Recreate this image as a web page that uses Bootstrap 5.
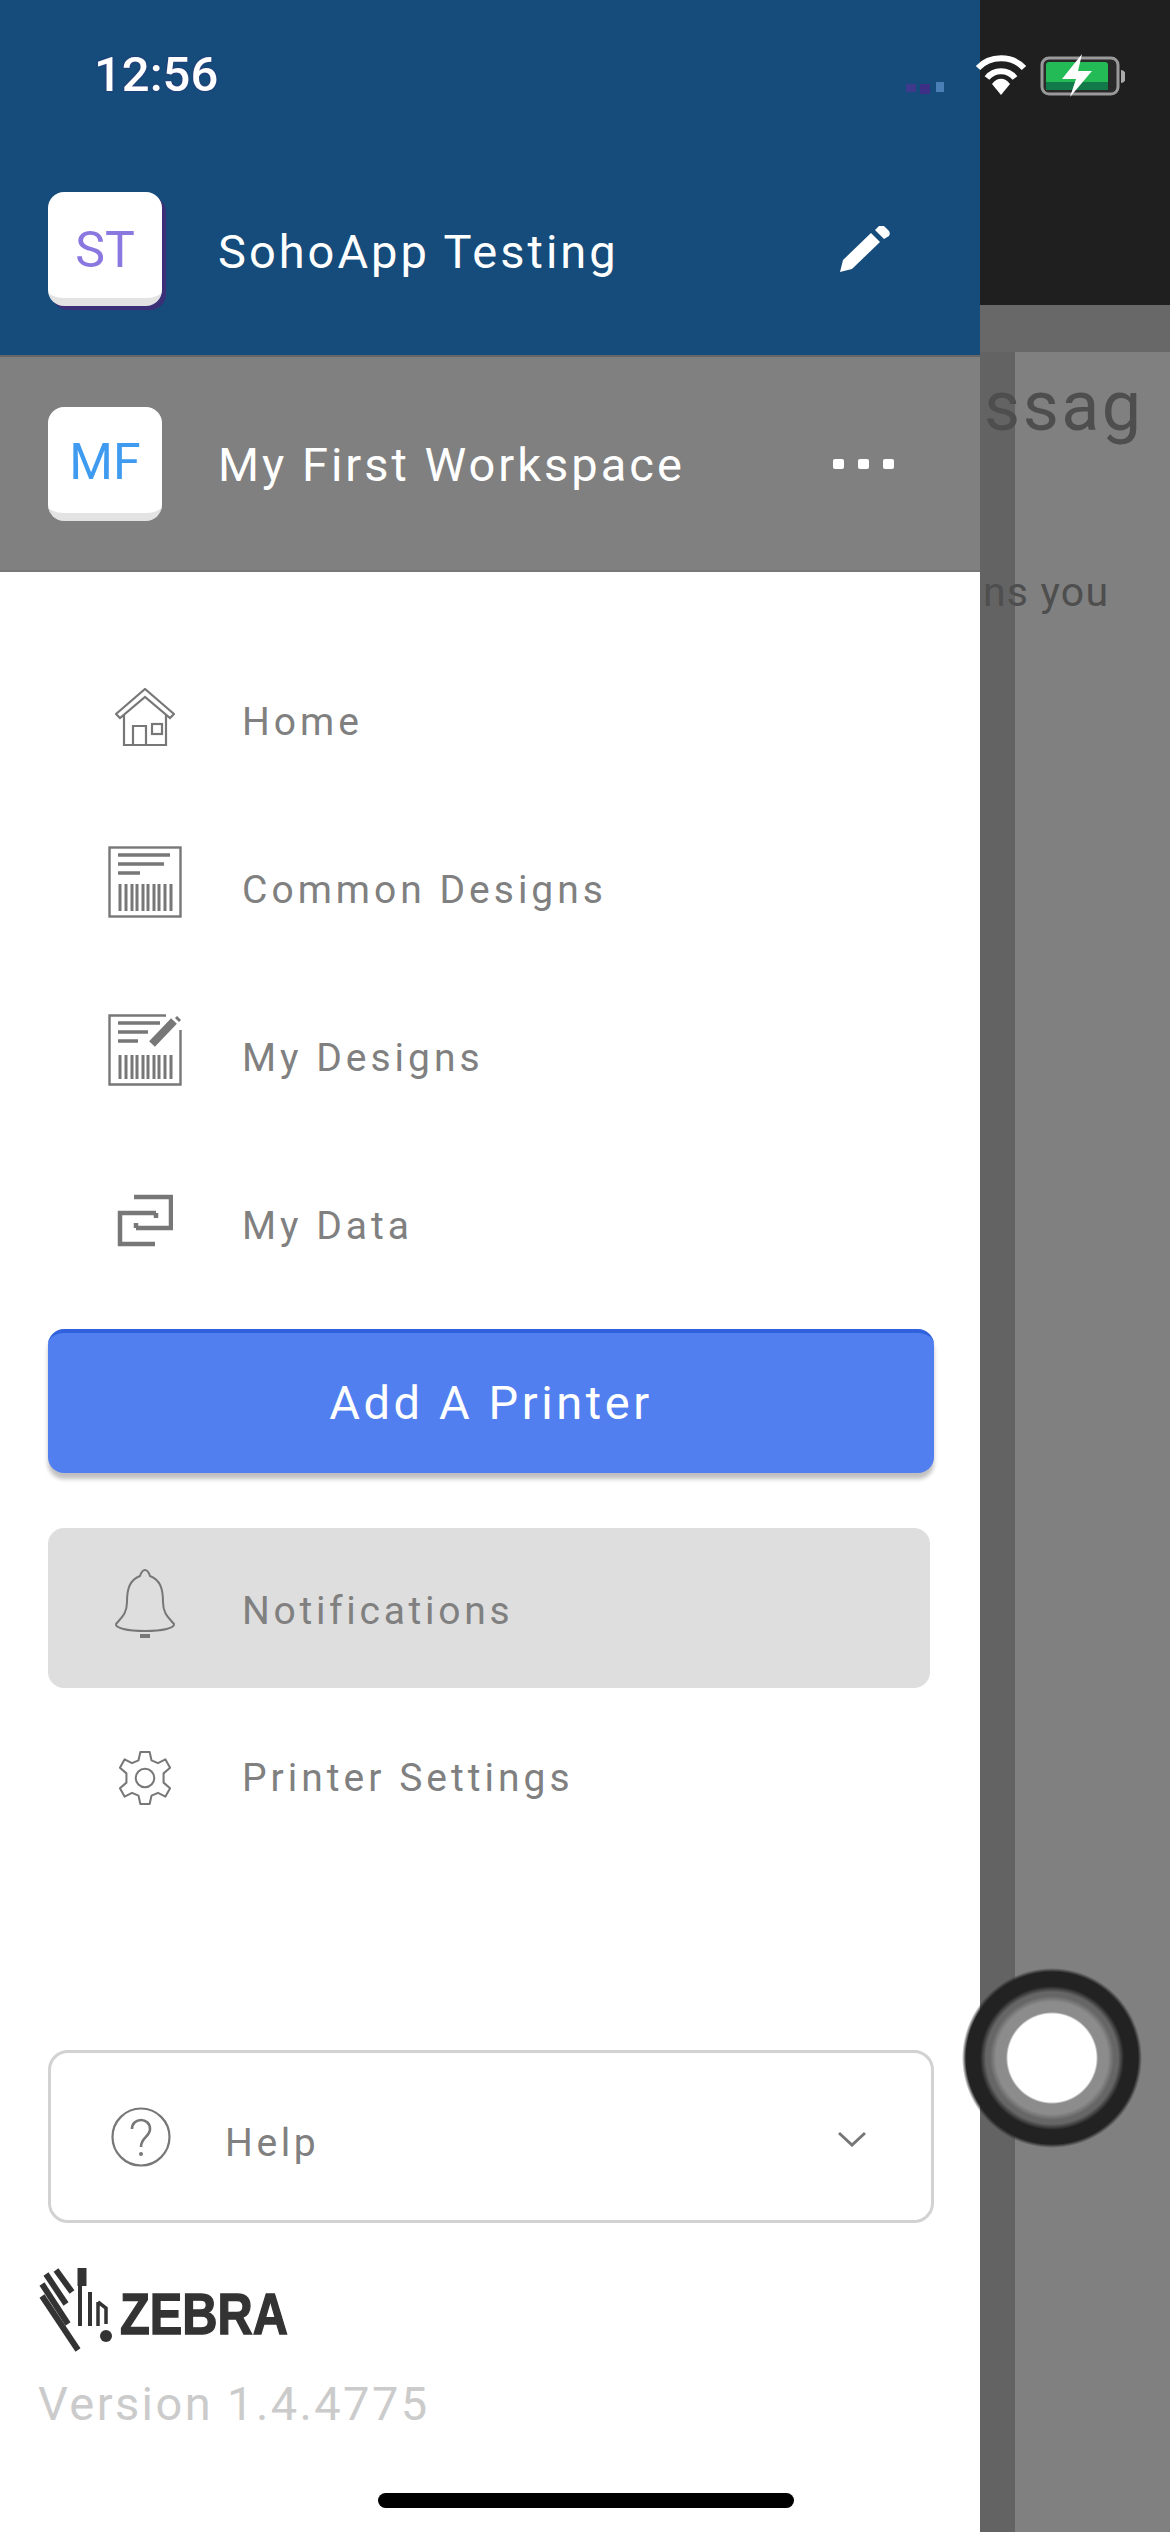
<!DOCTYPE html>
<html lang="en">
<head>
    <meta charset="UTF-8">
    <meta name="viewport" content="width=device-width, initial-scale=1.0">
    <title>SohoApp Drawer</title>
    <link rel="stylesheet" href="https://cdn.jsdelivr.net/npm/bootstrap@5.3.0/dist/css/bootstrap.min.css">
    <script src="https://cdn.jsdelivr.net/npm/bootstrap@5.3.0/dist/js/bootstrap.bundle.min.js"></script>

    <style>
        body {
            margin: 0;
            width: 1170px;
            height: 2532px;
            overflow: hidden;
            font-family: Roboto, "Liberation Sans", sans-serif;
            background-color: #808080;
        }

        .screen { width: 1170px; height: 2532px; position: relative; overflow: hidden; }

        /* status bar sits over both the drawer and what is behind it */
        .status-bar { position: absolute; top: 0; left: 0; width: 100%; height: 120px; z-index: 5; }
        .status-time { position: absolute; left: 94px; top: 46px; font-size: 49px; line-height: 58px; font-weight: 500; color: #fff; text-shadow: 0 0 2px #3b2a78; }
        .status-icons { position: absolute; left: 900px; top: 54px; }

        .drawer { width: 980px; flex: 0 0 980px; background-color: #fff; box-shadow: 2px 0 2px rgba(255,255,255,.5); }

        .ws-row { padding-left: 48px; padding-right: 85px; font-size: 47px; letter-spacing: 3px; color: #fff; }
        .ws-active { height: 355px; padding-top: 192px; padding-bottom: 50px; background-color: #154c7b; }
        .ws-other { height: 217px; background-color: #808080; border-top: 2px solid #666; border-bottom: 2px solid #777; }
        .ws-avatar { width: 114px; height: 114px; flex: 0 0 114px; margin-right: 56px; border-radius: 16px; background-color: #fff; border-bottom: 8px solid #e3e3e3; font-size: 50px; letter-spacing: 0; padding-top: 6px; }
        .ws-avatar-st { color: #8a78e0; box-shadow: 4px 4px 0 #3b2f78; padding-top: 10px; }
        .ws-avatar-mf { color: #3f9bf0; }
        .ws-title { padding-top: 25px; }
        .ws-pen { margin-top: 34px; }
        .ws-name-other { padding-top: 4px; }

        .side-list { padding-top: 66px; }
        .side-link { height: 168px; padding: 0 0 0 48px; color: #808080; font-size: 39px; letter-spacing: 4px; }
        .side-link:hover { color: #808080; }
        .side-icon { width: 194px; flex: 0 0 194px; }
        .side-icon svg { display: block; margin: 0 auto; }
        .lift-8 svg { margin-bottom: 16px; }
        .lift-6 svg { margin-bottom: 12px; }
        .lift-4 svg { margin-bottom: 8px; }

        .add-printer { width: 886px; height: 144px; margin: 19px 0 0 48px; font-size: 47px; letter-spacing: 3.6px; color: #fff; background-color: #527ff0; border: 0; border-top: 4px solid #2f62dc; border-radius: 16px; box-shadow: 0 6px 4px rgba(0,0,0,.25); }
        .add-printer:hover { color: #fff; background-color: #527ff0; }

        .side-active { width: 882px; height: 160px; margin: 55px 0 0 48px; padding-left: 0; border-radius: 16px; background-color: #dedede; letter-spacing: 3.7px; }
        .side-active span:last-child { padding-top: 6px; }
        .side-settings { margin-top: 6px; }

        .help-box { width: 886px; height: 173px; margin: auto 0 0 48px; padding: 0 64px 0 60px; border: 3px solid #d2d2d2; border-radius: 20px; color: #808080; font-size: 39px; letter-spacing: 3.6px; }
        .help-icon { margin-right: 54px; }
        .help-text { padding-top: 14px; }
        .help-arrow { margin-top: 4px; }

        .zebra-logo { margin: 41px 0 0 38px; height: 90px; }
        .version-text { margin: 20px 0 0 38px; font-size: 47px; line-height: 60px; letter-spacing: 2.4px; color: #cbcbcb; }
        .drawer-foot { height: 98px; }

        .home-bar { position: absolute; left: 378px; top: 2493px; width: 416px; height: 15px; border-radius: 8px; background-color: #000; z-index: 4; }

        .backdrop { flex: 1 1 auto; background: linear-gradient(90deg, #636363 35px, #808080 35px); overflow: hidden; }
        .backdrop-top { height: 305px; background-color: #1f1f1f; }
        .backdrop-strip { height: 47px; background-color: #686868; }
        .backdrop-title { margin: 14px 0 0 4px; font-size: 70px; line-height: 80px; letter-spacing: 2.5px; color: #4e4e4e; white-space: nowrap; }
        .backdrop-sub { margin: 121px 0 0 3px; font-size: 41px; line-height: 50px; letter-spacing: 1.2px; color: #4e4e4e; white-space: nowrap; }

        .fab-ring { position: absolute; left: 962px; top: 1968px; width: 180px; height: 180px; border-radius: 50%; z-index: 3; background: radial-gradient(circle, #fff 0, #fff 44px, #8c8c8c 46px, #8c8c8c 56px, #666 62px, #666 66px, #222 72px, #222 86px, rgba(34,34,34,0) 90px); }
    </style>
</head>
<body>
    <div class="screen d-flex">
        <!-- Status bar -->
        <div class="status-bar">
            <div class="status-time">12:56</div>
            <svg class="status-icons" width="225" height="50" viewBox="0 0 225 50">
                <rect x="6" y="30" width="10" height="8" fill="#3f3a8c"/>
                <rect x="20" y="30" width="10" height="10" fill="#3d2f85"/>
                <rect x="36" y="28" width="8" height="10" fill="#4a7fb5"/>
                <path d="M78 14 C90 1 112 1 124 14" fill="none" stroke="#fff" stroke-width="6"/>
                <path d="M87 24 C94 15 108 15 115 24" fill="none" stroke="#fff" stroke-width="6"/>
                <path d="M92 30 C97 23 105 23 110 30 L101 41 Z" fill="#fff"/>
                <rect x="142" y="4" width="76" height="36" rx="7" fill="#2a2a2a" stroke="#9a9a9a" stroke-width="3"/>
                <rect x="146" y="8" width="62" height="28" rx="3" fill="#22bb55"/>
                <rect x="146" y="28" width="62" height="8" fill="#127a48"/>
                <path d="M221 16 a5 6 0 0 1 0 13 Z" fill="#aaa"/>
                <path d="M182 0 L162 25 L176 25 L170 43 L192 17 L178 17 Z" fill="#fff"/>
            </svg>
        </div>

        <!-- Drawer -->
        <div class="drawer d-flex flex-column">
            <div class="ws-row ws-active d-flex align-items-start">
                <div class="ws-avatar ws-avatar-st d-flex align-items-center justify-content-center">ST</div>
                <div class="ws-title flex-grow-1">SohoApp Testing</div>
                <svg class="ws-pen me-1" width="52" height="46" viewBox="0 0 52 46">
                    <path d="M1 46 L4 34 L32 7 L41 16 L13 43 Z" fill="#fff"/>
                    <path d="M36 4 L40 0 C42 -1 44 -1 46 1 L50 5 C51 7 51 8 50 10 L45 13 Z" fill="#fff"/>
                </svg>
            </div>
            <div class="ws-row ws-other d-flex align-items-center">
                <div class="ws-avatar ws-avatar-mf d-flex align-items-center justify-content-center">MF</div>
                <div class="ws-name-other flex-grow-1">My First Workspace</div>
                <svg width="62" height="14" viewBox="0 0 62 14">
                    <rect x="0" y="2" width="11" height="10" rx="2" fill="#fff"/>
                    <rect x="25" y="2" width="11" height="10" rx="2" fill="#fff"/>
                    <rect x="50" y="2" width="11" height="10" rx="2" fill="#fff"/>
                </svg>
            </div>

            <nav class="side-list nav flex-column">
                <a class="side-link nav-link d-flex align-items-center" href="#">
                    <span class="side-icon lift-4">
                        <svg width="60" height="60" viewBox="0 0 60 60" fill="none" stroke="#777" stroke-width="2.2">
                            <path d="M1 26 L30 1 L59 26 L55 30 L30 9 L5 30 Z"/>
                            <path d="M9 27 V57 H51 V27"/>
                            <path d="M18 57 V38 H31 V57"/>
                            <rect x="37" y="36" width="10" height="10"/>
                        </svg>
                    </span>
                    <span>Home</span>
                </a>
                <a class="side-link nav-link d-flex align-items-center" href="#">
                    <span class="side-icon lift-8">
                        <svg width="74" height="72" viewBox="0 0 74 72" fill="none" stroke="#777">
                            <rect x="1.5" y="1.5" width="71" height="69" stroke-width="2.4"/>
                            <path d="M10 9 H62 M10 18 H56 M10 27 H32" stroke-width="3.5"/>
                            <path d="M12 38 V65 M18 38 V65 M24 38 V65 M29 38 V65 M35 38 V65 M40 38 V65 M46 38 V65 M51 38 V65 M57 38 V65 M63 38 V65" stroke-width="3"/>
                        </svg>
                    </span>
                    <span>Common Designs</span>
                </a>
                <a class="side-link nav-link d-flex align-items-center" href="#">
                    <span class="side-icon lift-8">
                        <svg width="74" height="72" viewBox="0 0 74 72" fill="none" stroke="#777">
                            <path d="M72.5 16 V70.5 H1.5 V1.5 H58" stroke-width="2.4"/>
                            <path d="M10 9 H52 M10 18 H40 M10 27 H30" stroke-width="3.5"/>
                            <path d="M12 41 V65 M18 41 V65 M24 41 V65 M29 41 V65 M35 41 V65 M40 41 V65 M46 41 V65 M51 41 V65 M57 41 V65 M63 41 V65" stroke-width="3"/>
                            <path d="M44 30 L66 7" stroke-width="8"/>
                            <path d="M68 3 L72 7" stroke-width="3"/>
                        </svg>
                    </span>
                    <span>My Designs</span>
                </a>
                <a class="side-link nav-link d-flex align-items-center" href="#">
                    <span class="side-icon lift-6">
                        <svg width="56" height="53" viewBox="0 0 56 53" fill="none" stroke="#777" stroke-width="4.5">
                            <path d="M17 3 H54 V34 H19"/>
                            <path d="M39 19 H3 V50 H38"/>
                            <path d="M19 29 V34 M39 19 V24"/>
                        </svg>
                    </span>
                    <span>My Data</span>
                </a>
            </nav>

            <button type="button" class="add-printer btn">Add A Printer</button>

            <a class="side-link side-active nav-link d-flex align-items-center" href="#">
                <span class="side-icon lift-4">
                    <svg width="64" height="72" viewBox="0 0 64 72" fill="none" stroke="#777" stroke-width="2">
                        <path d="M32 2 C35 2 36 5 37 8 C47 12 50 20 50 34 C50 46 56 50 61 56 C62 60 50 63 32 63 C14 63 2 60 3 56 C8 50 14 46 14 34 C14 20 17 12 27 8 C28 5 29 2 32 2 Z"/>
                        <path d="M27 68 H37" stroke-width="4"/>
                    </svg>
                </span>
                <span>Notifications</span>
            </a>
            <a class="side-link side-settings nav-link d-flex align-items-center" href="#">
                <span class="side-icon">
                    <svg width="52" height="56" viewBox="0 0 56 60" fill="none" stroke="#777" stroke-width="2.2">
                        <circle cx="28" cy="30" r="10"/>
                        <path d="M23 2 H33 L35 11 L42 14 L50 10 L55 19 L48 25 V35 L55 41 L50 50 L42 46 L35 49 L33 58 H23 L21 49 L14 46 L6 50 L1 41 L8 35 V25 L1 19 L6 10 L14 14 L21 11 Z" stroke-linejoin="round"/>
                    </svg>
                </span>
                <span>Printer Settings</span>
            </a>

            <div class="help-box d-flex align-items-center">
                <svg class="help-icon" width="60" height="60" viewBox="0 0 60 60" fill="none" stroke="#777" stroke-width="2.2">
                    <circle cx="30" cy="30" r="28.5"/>
                    <path d="M21 22 C21 10 39 10 39 22 C39 30 30 30 30 40" stroke-width="2.6"/>
                    <circle cx="30" cy="47" r="2" fill="#777" stroke="none"/>
                </svg>
                <span class="help-text flex-grow-1">Help</span>
                <svg class="help-arrow" width="30" height="16" viewBox="0 0 30 16" fill="none" stroke="#777" stroke-width="3">
                    <path d="M2 2 L15 14 L28 2"/>
                </svg>
            </div>

            <div class="zebra-logo d-flex align-items-center">
                <svg width="300" height="90" viewBox="0 0 300 90">
                    <g fill="none" stroke="#333">
                        <g stroke-width="6">
                            <path d="M4 32 L40 86"/>
                            <path d="M4 20 L30 60"/>
                            <path d="M8 10 L28 40"/>
                            <path d="M18 6 L34 28"/>
                        </g>
                        <path d="M44 4 V22" stroke-width="9"/>
                        <path d="M42 22 V62 M52 28 V62" stroke-width="4"/>
                        <path d="M60 38 V62 M60 38 L68 44 V60" stroke-width="3.5"/>
                    </g>
                    <circle cx="68" cy="72" r="6" fill="#333"/>
                    <text x="82" y="70" font-family="'Liberation Sans', sans-serif" font-weight="700" font-size="58" fill="#333" stroke="#333" stroke-width="1.4" textLength="168" lengthAdjust="spacingAndGlyphs">ZEBRA</text>
                </svg>
            </div>
            <div class="version-text">Version 1.4.4775</div>
            <div class="drawer-foot"></div>
        </div>

        <!-- Page behind the drawer -->
        <div class="backdrop">
            <div class="backdrop-top"></div>
            <div class="backdrop-strip"></div>
            <div class="backdrop-title">ssag</div>
            <div class="backdrop-sub">ns you</div>
        </div>

        <div class="fab-ring"></div>
        <div class="home-bar"></div>
    </div>
</body>
</html>
